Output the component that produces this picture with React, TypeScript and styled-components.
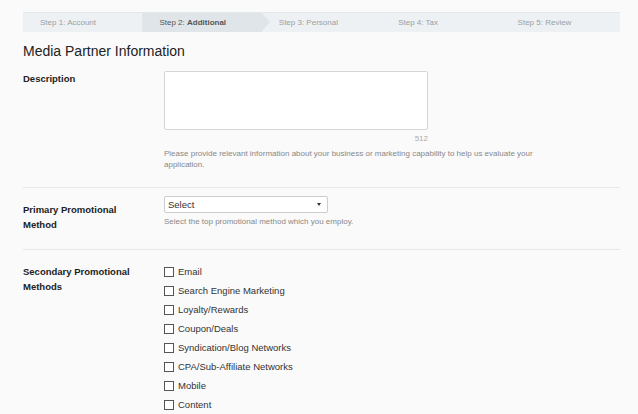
import React from 'react';
import styled, { createGlobalStyle } from 'styled-components';

const Global = createGlobalStyle`
  body { margin: 0; background: #fafafa; font-family: "Liberation Sans", Arial, sans-serif; }
`;

const Page = styled.div`
  padding: 12px 18px 0 23px;
`;

const Steps = styled.div`
  display: grid;
  grid-template-columns: repeat(5, 1fr);
  height: 19px;
  background: #edf1f3;
  border-top: 1px solid #e3e8ea;
`;

const Step = styled.div<{ $active?: boolean }>`
  position: relative;
  display: flex;
  align-items: center;
  padding-left: 17px;
  font-size: 8px;
  color: ${p => (p.$active ? '#555' : '#9aa0a3')};
  background: ${p => (p.$active ? '#dfe5e8' : 'transparent')};
  b { font-weight: 600; }
  ${p =>
    p.$active &&
    `&::after {
      content: '';
      position: absolute;
      right: -8px;
      top: 0;
      border-top: 9.5px solid transparent;
      border-bottom: 9.5px solid transparent;
      border-left: 8px solid #dfe5e8;
    }`}
`;

const Title = styled.h1`
  margin: 11px 0 12px;
  font-size: 14px;
  font-weight: 400;
  color: #222;
`;

const Row = styled.div<{ $last?: boolean }>`
  display: grid;
  grid-template-columns: 141px 1fr;
  padding: ${p => (p.$last ? '0' : '0 0 17px')};
  border-bottom: ${p => (p.$last ? 'none' : '1px solid #e8e8e8')};
  & + & { padding-top: 14px; }
`;

const Label = styled.div`
  font-size: 9.5px;
  font-weight: 700;
  color: #222;
  line-height: 15px;
`;

const Field = styled.div`
  display: flex;
  flex-direction: column;
`;

const TextArea = styled.div`
  width: 262px;
  height: 57px;
  background: #fff;
  border: 1px solid #d6d6d6;
  border-radius: 2px;
`;

const Counter = styled.div`
  width: 264px;
  text-align: right;
  font-size: 8px;
  color: #aaa;
  margin: 4px 0 5px;
`;

const Help = styled.div`
  font-size: 8px;
  color: #888;
  line-height: 11px;
  max-width: 400px;
`;

const Select = styled.div`
  width: 156px;
  height: 15px;
  background: #fff;
  border: 1px solid #ccc;
  border-radius: 2px;
  display: flex;
  align-items: center;
  justify-content: space-between;
  padding: 0 3px;
  font-size: 9.5px;
  color: #333;
  margin: -6px 0 3px;
  &::after {
    content: '';
    border-left: 2.5px solid transparent;
    border-right: 2.5px solid transparent;
    border-top: 3px solid #333;
    margin-right: 3px;
  }
`;

const Check = styled.label`
  display: flex;
  align-items: center;
  gap: 4px;
  height: 19px;
  font-size: 9.5px;
  color: #333;
  margin-top: -2px;
  & + & { margin-top: 0; }
`;

const Box = styled.span`
  width: 8px;
  height: 8px;
  border: 1px solid #555;
  background: #fff;
`;

const methods = [
  'Email',
  'Search Engine Marketing',
  'Loyalty/Rewards',
  'Coupon/Deals',
  'Syndication/Blog Networks',
  'CPA/Sub-Affiliate Networks',
  'Mobile',
  'Content',
];

export default function App() {
  return (
    <Page>
      <Global />
      <Steps>
        <Step>Step 1: Account</Step>
        <Step $active><span>Step 2: <b>Additional</b></span></Step>
        <Step>Step 3: Personal</Step>
        <Step>Step 4: Tax</Step>
        <Step>Step 5: Review</Step>
      </Steps>
      <Title>Media Partner Information</Title>
      <Row>
        <Label>Description</Label>
        <Field>
          <TextArea />
          <Counter>512</Counter>
          <Help>
            Please provide relevant information about your business or marketing capability to help us evaluate your
            application.
          </Help>
        </Field>
      </Row>
      <Row>
        <Label>Primary Promotional<br />Method</Label>
        <Field>
          <Select>Select</Select>
          <Help>Select the top promotional method which you employ.</Help>
        </Field>
      </Row>
      <Row $last>
        <Label>Secondary Promotional<br />Methods</Label>
        <Field>
          {methods.map(m => (
            <Check key={m}>
              <Box />
              {m}
            </Check>
          ))}
        </Field>
      </Row>
    </Page>
  );
}
